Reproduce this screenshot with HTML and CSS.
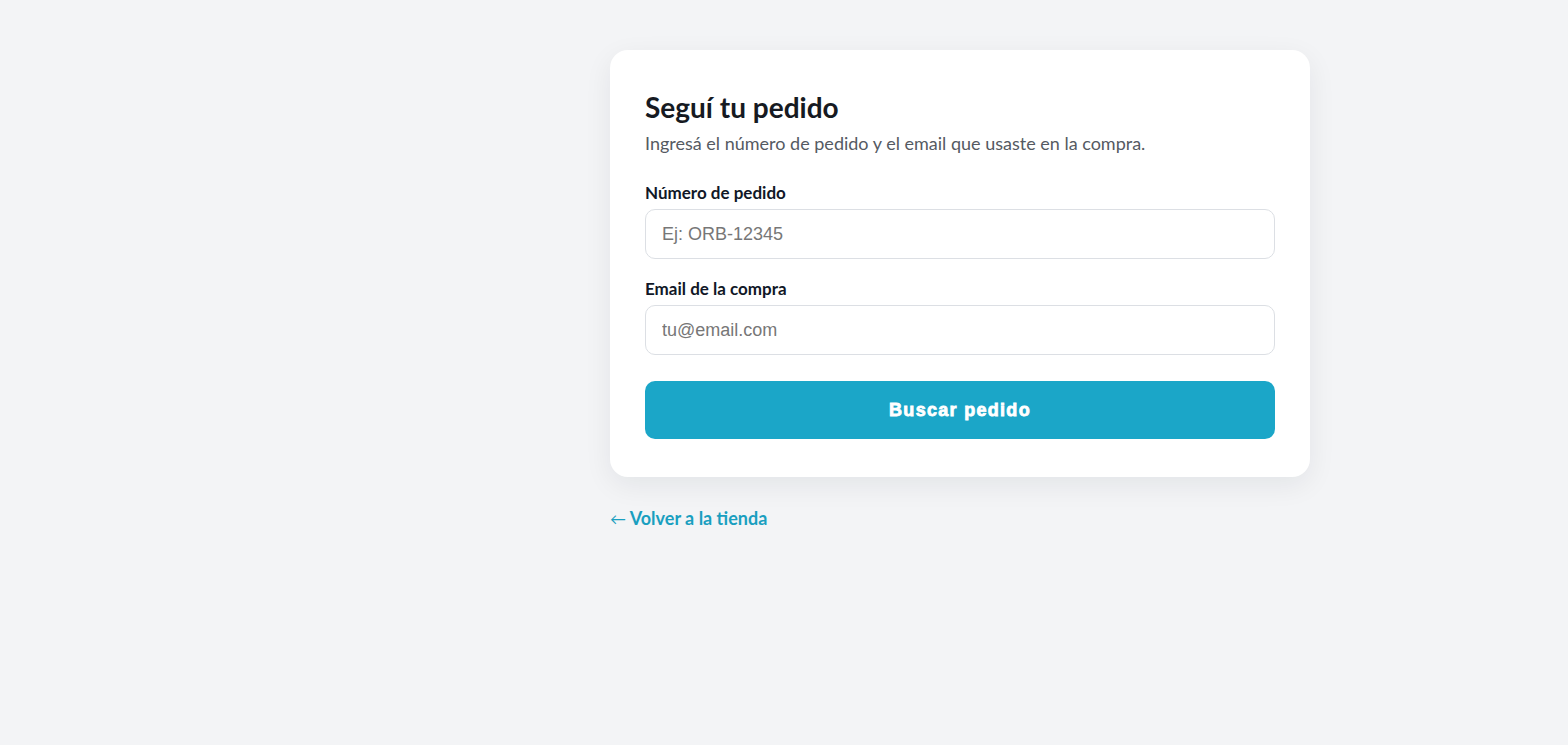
FILE: index.html
```html
<!DOCTYPE html>
<html lang="es">
<head>
<meta charset="utf-8">
<title>Seguí tu pedido</title>
<link rel="stylesheet" href="styles.css">
</head>
<body>
<main class="page">
  <section class="wrap">
    <form class="card">
      <h1 class="title">Seguí tu pedido</h1>
      <p class="subtitle">Ingresá el número de pedido y el email que usaste en la compra.</p>
      <label class="label" for="order">Número de pedido</label>
      <input class="input" id="order" type="text" placeholder="Ej: ORB-12345">
      <label class="label" for="email">Email de la compra</label>
      <input class="input" id="email" type="email" placeholder="tu@email.com">
      <button class="btn" type="button">Buscar pedido</button>
    </form>
    <a class="back" href="#"><span class="arrow">←</span> Volver a la tienda</a>
  </section>
</main>
</body>
</html>
```
FILE: styles.css
```css
html, body {
  margin: 0;
  padding: 0;
  background: #f3f4f6;
}
body {
  font-family: Lato, "Open Sans", sans-serif;
  color: #111827;
}
.page {
  display: flex;
  padding: 50px 0 0 610px;
}
.wrap {
  width: 700px;
  display: flex;
  flex-direction: column;
  align-items: flex-start;
}
.card {
  box-sizing: border-box;
  width: 700px;
  background: #fff;
  border-radius: 18px;
  box-shadow: 0 8px 28px rgba(17, 24, 39, 0.07);
  padding: 40px 35px 38px;
  display: flex;
  flex-direction: column;
}
.title {
  margin: 0;
  font-size: 28px;
  line-height: 34px;
  font-weight: 700;
  color: #161a22;
}
.subtitle {
  margin: 7px 0 0;
  font-size: 18px;
  line-height: 24px;
  color: #555a62;
}
.label {
  display: block;
  font-size: 17px;
  line-height: 20px;
  font-weight: 700;
  color: #111827;
  margin-top: 28px;
}
.input + .label {
  margin-top: 20px;
}
.input {
  box-sizing: border-box;
  margin-top: 6px;
  height: 50px;
  width: 100%;
  border: 1px solid #dcdfe4;
  border-radius: 10px;
  padding: 0 16px;
  font-family: "Liberation Sans", Arial, sans-serif;
  font-size: 18px;
  color: #111827;
  background: #fff;
  outline: none;
}
.input::placeholder {
  color: #777;
}
.btn {
  margin-top: 26px;
  height: 58px;
  width: 100%;
  border: none;
  border-radius: 10px;
  background: #1ba6c8;
  color: #fff;
  font-family: "Liberation Sans", Arial, sans-serif;
  font-weight: 700;
  font-size: 18px;
  letter-spacing: 1.3px;
  -webkit-text-stroke: 0.8px #fff;
  cursor: pointer;
}
.back {
  margin-top: 30px;
  font-size: 18px;
  line-height: 22px;
  font-weight: 700;
  color: #1a9fc0;
  text-decoration: none;
}
.arrow {
  font-weight: 400;
  font-size: 16px;
}
```
